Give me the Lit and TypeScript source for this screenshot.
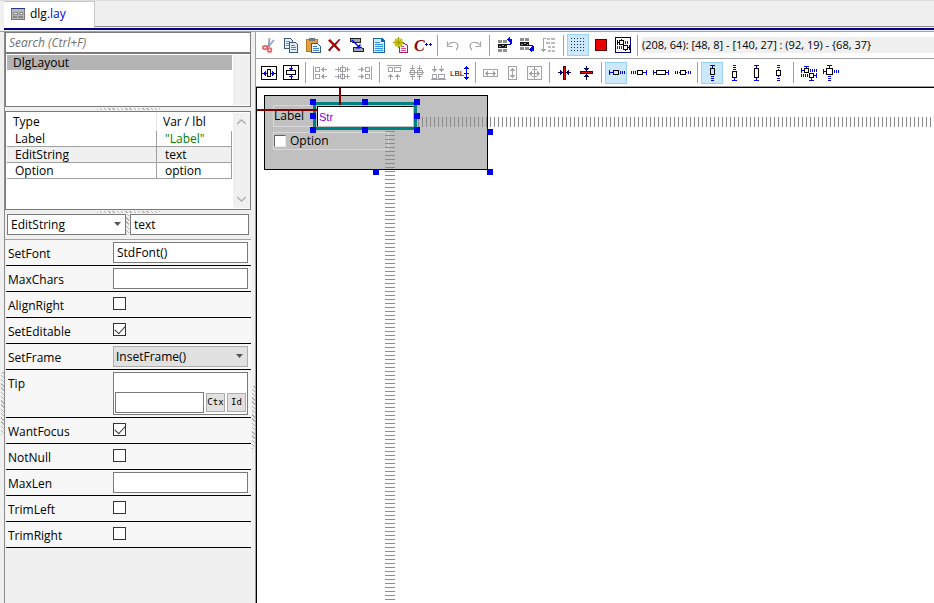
import { LitElement, html, svg, css, nothing } from "lit";
import { customElement, property } from "lit/decorators.js";
import { classMap } from "lit/directives/class-map.js";

const BLUE = "#0000f0";
const GRAY = "#a4a4a8";

const line = (d: string, color: string) =>
  svg`<path d=${d} fill="none" stroke=${color} />`;

/** Icon drawings on a 22 x 22 grid. */
const icons: Record<string, unknown> = {
  cut: svg`<g class="smooth"><path d="M12.500 4l-1 9M17 6l-6 7" fill="none" stroke="#8ca4c4" stroke-width="1.8"/>
    <ellipse cx="8" cy="13.500" rx="2.2" ry="1.7" fill="none" stroke="#dc6464" stroke-width="1.7"/>
    <ellipse cx="12.600" cy="16" rx="1.800" ry="2" fill="none" stroke="#dc6464" stroke-width="1.7"/>
    <path d="M9.500 13l3-1.500" stroke="#dc6464" stroke-width="1.8"/></g>`,
  copy: svg`<path d="M5.500 4.500h6l2 2v8h-8z" fill="#e4eef8" stroke="#38587c"/>${line("M7 7.500h4M7 9.500h5M7 11.500h5", "#6a94c4")}
    <path d="M10.500 8.500h6l2 2v8h-8z" fill="#e4eef8" stroke="#38587c"/>${line("M12 11.500h4M12 13.500h5M12 15.500h5", "#4a84c4")}`,
  paste: svg`<path d="M5.500 5.500h11v12h-11z" fill="#e4a040" stroke="#b87820"/><path d="M8 4h6v3h-6z" fill="#707884"/>
    <path d="M10.500 9.500h6l3 3v6h-9z" fill="#e8f2fc" stroke="#38587c"/>${line("M12 12.500h4M12 14.500h6M12 16.500h6", "#4a84c4")}`,
  remove: svg`<path class="smooth" d="M5 6.500L7 5l4.500 4.500L16 5l1.500.5-4.500 5.500 4.500 5-1.500 1.500-5-5-4.500 5L5 16l4.500-5z" fill="#9c0808"/>`,
  swap: svg`<path d="M5.500 4.500h10v4h-7l-3-1z" fill="#a8a8a8" stroke="#222"/><path d="M8.500 13.500h7l3 1v3h-10z" fill="#a8a8a8" stroke="#222"/>
    <g class="smooth"><path d="M7 6l7 7" stroke=${BLUE} stroke-width="1.300"/><path d="M15.500 14.500v-5l-5 5z" fill=${BLUE}/></g>`,
  doc: svg`<path d="M6.500 4.500h8l3 3v11h-11z" fill="#d8ecff" stroke="#1c64ac"/><path d="M14 4h1l3 3v1h-4z" fill="#1c64ac"/>
    ${line("M8 8.500h5M8 10.500h8M8 12.500h8M8 14.500h8M8 16.500h8", "#2e90e8")}`,
  star: svg`<path d="M10.500 9.500h5l3 2v7h-8z" fill="#fff4fa" stroke="#b41464"/>${line("M12 12.500h3M12 14.500h5M12 16.500h5", "#e04890")}
    <g class="smooth"><circle cx="9.500" cy="8.500" r="4.500" fill="#d8d410"/><path d="M9.500 3v11M4 8.500h11M6 5l7 7M13 5l-7 7" stroke="#a8a400" stroke-width="1"/></g>`,
  cpp: svg`<text x="3" y="17" class="cee">C</text>${line("M14 10.500h3M15.500 9v3M18 10.500h3M19.500 9v3", BLUE)}`,
  undo: svg`<g class="smooth"><path d="M7 11c3-4 10-3 10 1 0 2-1 3-2 4" fill="none" stroke=${GRAY} stroke-width="1.200"/><path d="M6.500 7.500v5h5" fill="none" stroke=${GRAY} stroke-width="1.200"/></g>`,
  redo: svg`<g class="smooth"><path d="M17 11c-3-4-10-3-10 1 0 2 1 3 2 4" fill="none" stroke=${GRAY} stroke-width="1.200"/><path d="M17.500 7.500v5h-5" fill="none" stroke=${GRAY} stroke-width="1.200"/></g>`,
  moveUp: svg`<path d="M5 6h4v3h-4zM10 6h4v3h-4zM5 15h4v3h-4zM10 15h4v3h-4z" fill="#909090"/><path d="M5 10h9v4h-9z" fill="#181818"/>
    ${line("M6 12.500h2M9 11.500h2M12 12.500h1", "#999")}<path d="M14 11h4v-6h-1v-2h-1v1h-1v1h-1v1h1v1h1v1h1v2h-3zM18 5h1v5h-1z" fill=${BLUE}/>`,
  moveDown: svg`<path d="M5 4h4v3h-4zM10 4h4v3h-4zM5 13h4v3h-4zM10 13h4v3h-4z" fill="#909090"/><path d="M5 8h9v4h-9z" fill="#181818"/>
    ${line("M6 10.500h2M9 9.500h2M12 10.500h1", "#999")}<path d="M14 11h4v1h1v5h-2v1h-1v-1h-1v-1h-1v-1h1v-1h1v-1h1v-1h-3z" fill=${BLUE}/>`,
  sort: svg`${line("M6.500 4v14M4 15.500h5M5 16.500h3M6 4.500h3", GRAY)}
    <path d="M10 4h3v2h-3zM14 4h4v2h-4zM9 8h4v2h-4zM14 8h4v2h-4zM11 12h3v2h-3zM15 12h3v2h-3zM11 16h3v2h-3zM15 16h3v2h-3z" fill="#bcbcbc"/>`,
  grid: svg`${[4, 7, 10, 13, 16].map((y) => [4, 7, 10, 13, 16].map((x) => svg`<path d="M${x} ${y}h1v1h-1z" fill="#103050"/>`))}`,
  red: svg`<path d="M6.500 5.500h11v11h-11z" fill="#ee0404" stroke="#5c0404"/>${line("M7 6l10 10M17 6l-10 10", "#d80404")}`,
  frame: svg`<path d="M4.500 3.500h15v15h-15z" fill="#fff" stroke="#00006c"/>
    ${line("M8.500 6.500h4v4h-4zM12.500 11.500h4v4h-4zM6.500 6v5M6 8.500h2M10.500 5v1M18.500 11v5M17 13.500h1M14.500 16v1", "#000")}
    ${line("M14.500 7v3M16.500 7v3M6.500 12v3M8.500 12v3M10.500 12v3", "#a00000")}`,

  hCenter: svg`${line("M4.500 4.500h15v13h-15zM10.500 7.500h3v7h-3z", "#000")}${line("M5 11.500h5M14 11.500h5M8.500 9v5M15.500 9v5M7.500 10v3M16.500 10v3", BLUE)}`,
  vCenter: svg`${line("M4.500 3.500h15v14h-15zM7.500 8.500h9v4h-9z", "#000")}${line("M12 4v4M12 13v4M10 6.500h4M11 7.500h2M10 14.500h4", BLUE)}`,
  left: line("M4.500 4v14M6.500 5.500h4v4h-4zM6.500 12.500h4v4h-4zM12 7.500h6M14.500 5v5M13.500 6v3M12 14.500h6M14.500 12v5M13.500 13v3", GRAY),
  middle: line("M11.500 3v15M9.500 5.500h5v4h-5zM9.500 12.500h4v4h-4zM4 7.500h5M7.500 5v5M15 7.500h4M16.500 5v5M4 14.500h5M7.500 12v5M14 14.500h5M16.500 12v5", GRAY),
  right: line("M18.500 4v14M12.500 5.500h4v4h-4zM12.500 12.500h4v4h-4zM5 7.500h6M8.500 5v5M9.500 6v3M5 14.500h6M8.500 12v5M9.500 13v3", GRAY),
  top: line("M4 3.500h15M5.500 5.500h4v4h-4zM11.500 5.500h6v4h-6zM7.500 12v6M5 14.500h5M6 13.500h3M14.500 12v6M12 14.500h5M13 13.500h3", GRAY),
  center: line("M4 10.500h15M5.500 8.500h4v4h-4zM12.500 8.500h5v4h-5zM7.500 3v5M5 6.500h5M14.500 3v5M12 6.500h5M7.500 13v5M5 14.500h5M14.500 13v5M12 14.500h5", GRAY),
  bottom: line("M4 17.500h15M5.500 12.500h4v4h-4zM11.500 12.500h6v4h-6zM7.500 4v6M5 7.500h5M6 8.500h3M14.500 4v6M12 7.500h5M13 8.500h3", GRAY),
  label: svg`<text x="1" y="14" class="lbl">LBL</text>${line("M17.500 4v14M15 6.500h5M16 5.500h3M15 11.500h5M15 15.500h5M16 16.500h3", BLUE)}`,
  sameW: line("M4.500 7.500h14v7h-14zM6 11.500h11M8.500 9v5M14.500 9v5M7.500 10v3M15.500 10v3", GRAY),
  sameH: line("M7.500 4.500h8v13h-8zM11.500 6v10M9 8.500h5M9 13.500h5M10 7.500h3M10 14.500h3", GRAY),
  sameBoth: line("M4.500 4.500h14v13h-14zM6 11.500h11M8.500 9v5M14.500 9v5M7.500 10v3M15.500 10v3M11.500 5v12M9 7.500h5M9 14.500h5", GRAY),
  redV: svg`<path d="M10.500 4.500h2v13h-2z" fill="#e01010" stroke="#500"/>${line("M5 10.500h5M13 10.500h5M7.500 8v5M8.500 9v3M15.500 8v5M14.500 9v3", "#00006c")}`,
  redH: svg`<path d="M5.500 9.500h12v2h-12z" fill="#e01010" stroke="#500"/>${line("M11.500 4v5M11.500 12v6M9 6.500h5M10 7.500h3M9 14.500h5M10 13.500h3", "#00006c")}`,
  hLeft: svg`${line("M8.500 8.500h5v4h-5z", "#000")}${line("M4.500 8v5M5 10.500h3M15.500 9v3M17.500 9v3M19.500 9v3", BLUE)}`,
  hRight: svg`${line("M10.500 8.500h5v4h-5z", "#000")}${line("M19.500 8v5M16 10.500h3M4.500 9v3M6.500 9v3M8.500 9v3", BLUE)}`,
  hFill: svg`${line("M7.500 8.500h9v4h-9z", "#000")}${line("M4.500 8v5M5 10.500h2M17 10.500h2M19.500 8v5", BLUE)}`,
  hFree: svg`${line("M9.500 8.500h5v4h-5z", "#000")}${line("M4.500 9v3M6.500 9v3M8.500 10v1M15.500 10v1M17.500 9v3M19.500 9v3", BLUE)}`,
  vTop: svg`${line("M9.500 6.500h4v6h-4z", "#000")}${line("M9 3.500h5M11.500 4v2M10 14.500h3M10 16.500h3M10 18.500h3", BLUE)}`,
  vBottom: svg`${line("M9.500 9.500h4v6h-4z", "#000")}${line("M9 18.500h5M11.500 16v2M10 3.500h3M10 5.500h3M10 7.500h3", BLUE)}`,
  vFill: svg`${line("M9.500 6.500h4v9h-4z", "#000")}${line("M9 3.500h5M11.500 4v2M9 18.500h5M11.500 16v2", BLUE)}`,
  vFree: svg`${line("M9.500 8.500h4v5h-4z", "#000")}${line("M10 3.500h3M10 5.500h3M11 7.500h1M11 14.500h1M10 16.500h3M10 18.500h3", BLUE)}`,
  both: svg`${line("M7.500 6.500h4v4h-4zM12.500 11.500h4v4h-4z", "#000")}
    ${line("M4.500 6v5M5 8.500h2M7 4.500h5M9.500 5v1M13.500 7v3M15.500 7v3M17.500 7v3M19.500 7v3M4.500 12v3M6.500 12v3M8.500 12v3M10.500 12v3M17 13.500h2M19.500 11v5M12 18.500h5M14.500 16v2", BLUE)}`,
  corner: svg`${line("M7.500 6.500h6v6h-6z", "#000")}${line("M4.500 7v5M5 9.500h2M8 3.500h5M10.500 4v2M15.500 8v3M17.500 8v3M19.500 8v3M9 14.500h3M9 16.500h3M9 18.500h3", BLUE)}`,
};

type Tool = [icon: string, title: string];

const editGroups: Tool[][] = [
  [["cut", "Cut"], ["copy", "Copy"], ["paste", "Paste"], ["remove", "Delete"], ["swap", "Duplicate"], ["doc", "Select all"], ["star", "New item"], ["cpp", "Copy as code"]],
  [["undo", "Undo"], ["redo", "Redo"]],
  [["moveUp", "Move up"], ["moveDown", "Move down"], ["sort", "Sort items"]],
  [["grid", "Use grid"], ["red", "Ignore minimum size"], ["frame", "Show springs"]],
];

const alignGroups: Tool[][] = [
  [["hCenter", "Center horizontally"], ["vCenter", "Center vertically"]],
  [["left", "Align left"], ["middle", "Align horizontal centers"], ["right", "Align right"]],
  [["top", "Align top"], ["center", "Align vertical centers"], ["bottom", "Align bottom"], ["label", "Align labels"]],
  [["sameW", "Same width"], ["sameH", "Same height"], ["sameBoth", "Same size"]],
  [["redV", "Minimum width"], ["redH", "Minimum height"]],
  [["hLeft", "Spring left"], ["hRight", "Spring right"], ["hFill", "Horizontal sizing"], ["hFree", "Horizontal center"]],
  [["vTop", "Spring top"], ["vBottom", "Spring bottom"], ["vFill", "Vertical sizing"], ["vFree", "Vertical center"]],
  [["both", "Size both ways"], ["corner", "Top left"]],
];

const pressed = new Set(["grid", "hLeft", "vTop"]);

const base = css`
  * { box-sizing: border-box; }
  button, input, select { font: inherit; color: inherit; margin: 0; border-radius: 0; outline: none; }
`;

@customElement("tool-row")
class ToolRow extends LitElement {
  @property({ attribute: false }) groups: Tool[][] = [];

  static styles = [base, css`
    :host { display: flex; align-items: center; height: 27px; padding-left: 1px; background: #fff; border-bottom: 1px solid #a0a0a0; }
    .group { display: flex; flex: none; }
    .sep { flex: none; width: 1px; height: 21px; margin: 0 3px 0 4px; background: #a0a0a0; }
    .tool { width: 22px; height: 22px; padding: 0; border: 0; background: none; }
    .on { background: #cce8ff; box-shadow: inset 0 0 0 1px #99d1ff; }
    svg { display: block; shape-rendering: crispEdges; }
    .smooth { shape-rendering: auto; }
    .cee { font: italic bold 16px "Liberation Serif", serif; fill: #8c0404; }
    .lbl { font: 8px "Liberation Sans Narrow", "Liberation Sans", sans-serif; fill: #000; }
    ::slotted(output) { flex: 1; }
  `];

  render() {
    return html`${this.groups.map((group, i) => html`
      ${i ? html`<span class="sep"></span>` : nothing}
      <div class="group">${group.map(([icon, title]) => html`
        <button class=${classMap({ tool: true, on: pressed.has(icon) })} aria-label=${title} title=${title}>
          <svg width="22" height="22" viewBox="0 0 22 22">${icons[icon]}</svg>
        </button>`)}</div>`)}<slot></slot>`;
  }
}

interface Prop { name: string; kind: "text" | "check" | "select" | "tip"; value?: string; checked?: boolean; }

const props: Prop[] = [
  { name: "SetFont", kind: "text", value: "StdFont()" },
  { name: "MaxChars", kind: "text" },
  { name: "AlignRight", kind: "check" },
  { name: "SetEditable", kind: "check", checked: true },
  { name: "SetFrame", kind: "select", value: "InsetFrame()" },
  { name: "Tip", kind: "tip" },
  { name: "WantFocus", kind: "check", checked: true },
  { name: "NotNull", kind: "check" },
  { name: "MaxLen", kind: "text" },
  { name: "TrimLeft", kind: "check" },
  { name: "TrimRight", kind: "check" },
];

const items = [
  { type: "Label", name: '"Label"', literal: true },
  { type: "EditString", name: "text", selected: true },
  { type: "Option", name: "option" },
];

@customElement("side-panel")
class SidePanel extends LitElement {
  static styles = [base, css`
    :host { display: flex; width: 255px; flex: none; background: #f0f0f0; border-top: 1px solid #a0a0a0; }
    .gutter { display: flex; width: 5px; flex: none; justify-content: center; padding-top: 340px; border-right: 1px solid #8c8c8c; }
    .gutter.end { width: 4px; padding-top: 354px; border: 0; }
    .grip { background: repeating-linear-gradient(45deg, #b0b0b0 0 1px, #f0f0f0 1px 3px); }
    .gutter .grip { width: 3px; height: 63px; }
    .body { flex: 1; min-width: 0; }
    .split { display: flex; justify-content: center; align-items: center; height: 4px; }
    .split .grip { width: 63px; height: 2px; }
    .search { display: block; width: 100%; height: 21px; padding: 0 3px; border: 1px solid #7a7a7a; background: #fff; font-style: italic; }
    .search::placeholder { color: #707070; opacity: 1; }
    .box { display: flex; border: 1px solid #7a7a7a; background: #fff; padding: 1px 0 1px 1px; }
    .layouts { height: 54px; }
    .members { height: 99px; }
    .list { flex: 1; margin: 0; padding: 0; list-style: none; }
    .entry { height: 15px; line-height: 15px; padding-left: 6px; background: #b4b4b4; }
    .scroll { display: flex; flex-direction: column; justify-content: space-between; align-items: center; width: 17px; margin-left: 1px; padding: 6px 0; background: #f0f0f0; }
    table { flex: 1; align-self: flex-start; border-collapse: separate; border-spacing: 0; table-layout: fixed; }
    th { height: 18px; padding: 0 6px; font-weight: normal; text-align: left; }
    td { height: 16px; padding: 0 8px; line-height: 15px; border-right: 1px solid #a0a0a0; border-bottom: 1px solid #a0a0a0; }
    .type { width: 150px; }
    th.type { border-right: 1px solid #e4e4e4; }
    .literal { color: #008000; }
    .selected { background: #f0f0f0; }
    .naming { display: flex; padding: 0 2px 4px; }
    .pick { position: relative; flex: 1; }
    .pick::after { content: ""; position: absolute; top: 8px; right: 5px; width: 7px; height: 4px; background: #555; clip-path: polygon(0 0, 100% 0, 50% 100%); pointer-events: none; }
    .field { display: block; width: 100%; height: 21px; padding: 0 3px; border: 1px solid #7a7a7a; background: #fff; appearance: none; }
    .naming .grip { width: 3px; margin: 0 1px 0 0; }
    .naming .var { flex: 1; min-width: 0; }
    .props { padding-left: 1px; border-top: 1px solid #a0a0a0; }
    .row { display: grid; grid-template-columns: 107px 1fr; min-height: 26px; padding: 2px 3px 2px 0; background: #f7f7f7; border-bottom: 1px solid #000; }
    .row label { padding: 3px 2px 0; line-height: 18px; }
    .row .flat { padding: 0 2px; background: #e1e1e1; border-color: #adadad; }
    .check { appearance: none; width: 13px; height: 13px; margin: 3px 0 0; border: 1px solid #333; background: #fff; display: grid; place-items: center; }
    .check:checked::after { content: ""; width: 9px; height: 5px; border: solid #333; border-width: 0 0 1px 1px; transform: rotate(-48deg) translate(1px, -1px); }
    .tip { border: 1px solid #7a7a7a; background: #fff; height: 43px; padding: 19px 1px 0; display: flex; gap: 2px; }
    .tip .field { flex: 1; min-width: 0; }
    .mini { width: 19px; height: 19px; margin-top: 1px; padding: 0; border: 1px solid #adadad; background: #e1e1e1; font: 9px/17px "DejaVu Sans Mono", monospace; }
  `];

  private control(p: Prop) {
    if (p.kind === "check") return html`<input id=${p.name} class="check" type="checkbox" .checked=${!!p.checked} />`;
    if (p.kind === "select") return html`<div class="pick"><select id=${p.name} class="field flat"><option>${p.value}</option></select></div>`;
    if (p.kind === "tip") return html`<div class="tip"><input id=${p.name} class="field" /><button class="mini">Ctx</button><button class="mini">Id</button></div>`;
    return html`<input id=${p.name} class="field" .value=${p.value ?? ""} />`;
  }

  render() {
    const chevron = (d: string) => html`<svg width="9" height="6" viewBox="0 0 9 6"><path d=${d} fill="none" stroke="#b0b0b0" stroke-width="1.500" /></svg>`;
    return html`
      <div class="gutter"><div class="grip"></div></div>
      <div class="body">
        <input class="search" aria-label="Search" placeholder="Search (Ctrl+F)" />
        <div class="box layouts">
          <ul class="list"><li class="entry">DlgLayout</li></ul>
          <div class="scroll"></div>
        </div>
        <div class="split"><div class="grip"></div></div>
        <div class="box members">
          <table>
            <thead><tr><th class="type">Type</th><th>Var / lbl</th></tr></thead>
            <tbody>${items.map((i) => html`<tr class=${classMap({ selected: !!i.selected })}>
              <td>${i.type}</td><td class=${classMap({ literal: !!i.literal })}>${i.name}</td></tr>`)}</tbody>
          </table>
          <div class="scroll">${chevron("M0 5l4.500-4L9 5")}${chevron("M0 1l4.500 4L9 1")}</div>
        </div>
        <div class="split"><div class="grip"></div></div>
        <div class="naming">
          <div class="pick"><select class="field" aria-label="Item type"><option>EditString</option></select></div>
          <div class="grip"></div>
          <div class="var"><input class="field" aria-label="Variable name" .value=${"text"} /></div>
        </div>
        <div class="props">${props.map((p) => html`<div class="row"><label for=${p.name}>${p.name}</label>${this.control(p)}</div>`)}</div>
      </div>
      <div class="gutter end"><div class="grip"></div></div>`;
  }
}

/** Handle centres on the design surface. */
const handles = [
  [56, 14], [108, 14], [160, 14], [56, 28], [160, 28], [56, 42], [108, 42], [160, 42],
  [233, 44], [119, 84], [233, 84],
];

@customElement("design-canvas")
class DesignCanvas extends LitElement {
  static styles = [base, css`
    :host { display: block; position: relative; flex: 1; overflow: hidden; background: #fff; border: solid #000; border-width: 1px 0 0 1px; }
    :host > * { position: absolute; }
    .dialog { left: 7px; top: 7px; width: 224px; height: 75px; background: #c0c0c0; border: 1px solid #000; }
    .item { border: 1px solid #d8d8d8; display: flex; align-items: center; white-space: nowrap; }
    .label { left: 16px; top: 17px; width: 41px; height: 22px; }
    .option { left: 16px; top: 44px; width: 116px; height: 18px; gap: 4px; }
    .tick { appearance: none; flex: none; width: 12px; height: 12px; background: #fff; border: 1px solid; border-color: #606060 #e8e8e8 #e8e8e8 #606060; }
    .edit { left: 56px; top: 14px; width: 104px; height: 28px; border: 3px solid #008080; background: #c0c0c0; }
    .edit input { display: block; width: 97px; height: 21px; margin: 1px 0 0 1px; padding: 0 1px; background: #fff; border: 1px solid; border-color: #000 #c0c0c0 #c0c0c0 #000; color: #8000e0; font: 11px "Liberation Sans", sans-serif; }
    .pin { background: #800000; }
    .pin.down { left: 82px; top: 0; width: 2px; height: 17px; }
    .pin.across { left: 0; top: 21px; width: 60px; height: 2px; }
    .spring.across { left: 161px; right: 0; top: 29px; height: 10px; background: repeating-linear-gradient(90deg, #8c8c8c 0 1px, transparent 1px 4px); }
    .spring.down { left: 128px; top: 43px; bottom: 0; width: 10px; background: repeating-linear-gradient(180deg, #8c8c8c 0 1px, transparent 1px 4px); }
    .handles { left: 0; top: 0; }
  `];

  render() {
    return html`
      <div class="dialog"></div>
      <div class="item label">Label</div>
      <label class="item option"><input class="tick" type="checkbox" />Option</label>
      <div class="spring across"></div>
      <div class="spring down"></div>
      <div class="edit"><input aria-label="Edit string" .value=${"Str"} /></div>
      <div class="pin down"></div>
      <div class="pin across"></div>
      <svg class="handles" width="240" height="90">${handles.map(([x, y]) => svg`<rect x=${x - 3} y=${y - 3} width="6" height="6" fill=${BLUE} />`)}</svg>`;
  }
}

@customElement("app-root")
class AppRoot extends LitElement {
  static styles = [base, css`
    :host { display: flex; flex-direction: column; min-height: 100vh; background: #f0f0f0; color: #000; font: 12px/16px "Open Sans", "Noto Sans", sans-serif; }
    .tabs { display: flex; height: 30px; padding-left: 4px; border-top: 1px solid #dcdcdc; }
    .bar { flex: 1; display: flex; border-bottom: 2px solid #00007c; }
    .tab { display: flex; align-items: center; gap: 4px; width: 91px; padding: 0 7px 2px; border: solid #c8c8c8; border-width: 1px 1px 0 0; background: #fff; }
    .tab svg { display: block; margin: 0; }
    .ext { color: #0000f0; }
    .rest { flex: 1; margin-bottom: 1px; border-bottom: 1px solid #8c8c8c; }
    .main { flex: 1; display: flex; padding-top: 1px; }
    .work { flex: 1; min-width: 0; display: flex; flex-direction: column; border-left: 1px solid #a0a0a0; border-top: 1px solid #a0a0a0; background: #fff; }
    .tall { height: 28px; }
    .status { height: 16px; font-size: 11px; line-height: 16px; background: #f0f0f0; white-space: nowrap; }
    .sep { width: 1px; height: 21px; margin: 0 4px; background: #a0a0a0; }
  `];

  render() {
    return html`
      <header class="tabs"><div class="bar" role="tablist">
        <button class="tab" role="tab" aria-selected="true">
          <svg width="15" height="12" viewBox="0 0 15 12" shape-rendering="crispEdges">
            <path d="M.500.500h13v11h-13z" fill="#b8b8b8" stroke="#787878" />
            <path d="M0 0h14v1h-14z" fill="#2c3c80" />
            <path d="M2.500 4.500h4v2h-4zM8.500 4.500h3v2h-3zM2.500 8.500h3v1h-3zM7.500 8.500h4v1h-4z" fill="#eee" stroke="#888" />
          </svg>
          <span>dlg<span class="ext">.lay</span></span>
        </button>
        <div class="rest"></div>
      </div></header>
      <main class="main">
        <side-panel></side-panel>
        <section class="work">
          <tool-row .groups=${editGroups}><span class="sep"></span><output class="status">(208, 64): [48, 8] - [140, 27] : (92, 19) - {68, 37}</output></tool-row>
          <tool-row class="tall" .groups=${alignGroups}></tool-row>
          <design-canvas></design-canvas>
        </section>
      </main>`;
  }
}
